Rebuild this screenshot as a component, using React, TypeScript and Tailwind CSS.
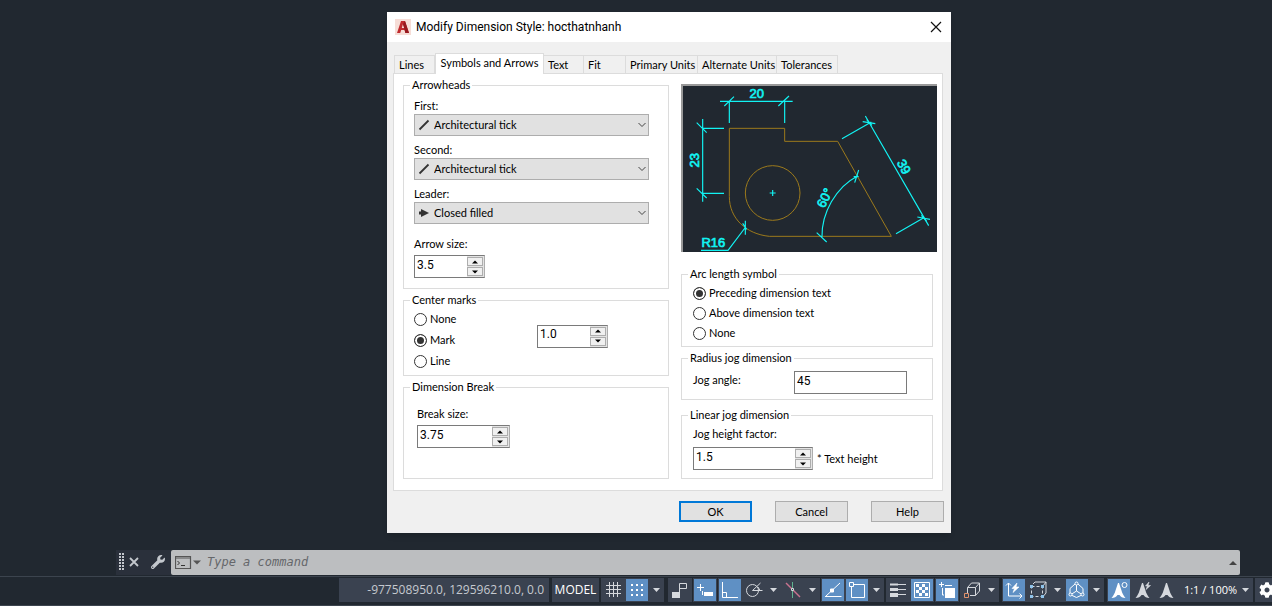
import type { ReactNode } from 'react';
import { FaCog, FaWrench } from 'react-icons/fa';

const TABS = [
  { label: 'Lines', width: 'w-[41px]' },
  { label: 'Symbols and Arrows', width: 'w-[109px]' },
  { label: 'Text', width: 'w-[40px]' },
  { label: 'Fit', width: 'w-[42px]' },
  { label: 'Primary Units', width: 'w-[72px]' },
  { label: 'Alternate Units', width: 'w-[79px]' },
  { label: 'Tolerances', width: 'w-[61px]' },
];

function AppLogo() {
  return (
    <svg viewBox="0 0 16 16" className="size-4" aria-hidden="true">
      <rect width="16" height="16" fill="#f6ddd7" />
      <path d="M2 14 6 2h4l4 12h-3.600l-.8-3H6.200l-1 3z" fill="#c02a2e" />
      <path d="M8 5 6.800 9h2.500z" fill="#f6ddd7" />
      <path d="M10 2l4 12h-3.600L8 5z" fill="#97191f" />
    </svg>
  );
}

function Group({ title, className, children }: { title: string; className?: string; children: ReactNode }) {
  return (
    <fieldset className={`border border-[#dcdcdc] ${className ?? ''}`}>
      <legend className="ml-1.5 px-0.5">{title}</legend>
      {children}
    </fieldset>
  );
}

function ArrowSelect({ id, label, value }: { id: string; label: string; value: string }) {
  return (
    <div className="flex flex-col gap-px">
      <label htmlFor={id}>{label}</label>
      <div className="relative">
        <select
          id={id}
          defaultValue={value}
          className="block h-[22px] w-full appearance-none border border-[#adadad] bg-[#e1e1e1] pl-[19px] outline-none"
        >
          <option>Architectural tick</option>
          <option>Closed filled</option>
        </select>
        <svg viewBox="0 0 12 12" className="pointer-events-none absolute left-1 top-[5px] size-3" aria-hidden="true">
          {value === 'Closed filled' ? (
            <path d="M1 4.500h2V2l8 4-8 4V7.500H1z" fill="#333" />
          ) : (
            <path d="M1.500 10.500l9-9" stroke="#333" strokeWidth="1.800" />
          )}
        </svg>
        <svg viewBox="0 0 8 6" className="pointer-events-none absolute right-[3px] top-2 h-1.5 w-2" aria-hidden="true">
          <path d="M.5 1 4 4.500 7.500 1" fill="none" stroke="#444" />
        </svg>
      </div>
    </div>
  );
}

function Spinner({ id, label, value, width }: { id: string; label?: string; value: string; width: string }) {
  return (
    <div className={`flex h-[23px] border border-[#7a7a7a] border-r-[#adadad] bg-white ${width}`}>
      <input
        id={id}
        aria-label={label}
        defaultValue={value}
        className="mb-1 min-w-0 flex-1 pl-0.5 font-['Roboto',sans-serif] text-[12px] leading-4 outline-none"
      />
      <div className="flex w-[17px] flex-col gap-px bg-[#e3e3e3] p-px pl-0">
        {['Increase', 'Decrease'].map((action) => (
          <button
            key={action}
            type="button"
            aria-label={action}
            className="flex min-h-0 flex-1 items-center justify-center border border-[#adadad] bg-[#f0f0f0]"
          >
            <svg viewBox="0 0 6 4" className="h-1 w-1.5" aria-hidden="true">
              <path d={action === 'Increase' ? 'M0 3.500 3 .5l3 3z' : 'M0 .5l3 3 3-3z'} fill="#000" />
            </svg>
          </button>
        ))}
      </div>
    </div>
  );
}

function Radio({ name, label, checked }: { name: string; label: string; checked?: boolean }) {
  return (
    <label className="flex items-center gap-[3px]">
      <input
        type="radio"
        name={name}
        defaultChecked={checked}
        className="size-[13px] appearance-none rounded-full border border-[#333] bg-white checked:bg-[#333] checked:shadow-[inset_0_0_0_2px_white]"
      />
      {label}
    </label>
  );
}

function DimensionPreview() {
  return (
    <svg viewBox="15 12 768 504" className="h-[168px] w-full bg-[#212830]" aria-label="Dimension preview">
      <g fill="none" stroke="#9c7a1c" strokeWidth="3">
        <path d="M160 145H326V184H485L646 469H280C210 462 160 415 160 350Z" />
        <circle cx="290" cy="339" r="82" />
      </g>
      <g fill="none" stroke="#12f3f3" strokeWidth="3.500">
        <path d="M132 64H350M160 64V129M326 64V129M145 78 174 50M307 78 339 48" />
        <path d="M80 117V365M80 145H144M80 340H144M62 128 92 158M62 325 92 354" />
        <path d="M281 339H299M290 330V348" />
        <path d="M75 511H156L209 441M208 422V464M200 430 212 448" />
        <path d="M438 470C437 400 478 322 546 287M422 458 452 486M533 290H548M536 308 548 270" />
        <path d="M568 108 758 437M498 176 586 126M660 461 746 412" />
        <path d="M560 125 598 131M572 119 588 136M724 411 762 418M736 406 752 424" />
      </g>
      <g
        fill="#12f3f3"
        stroke="#12f3f3"
        strokeWidth="2"
        fontSize="39"
        textAnchor="middle"
        className="font-['Liberation_Sans',sans-serif]"
      >
        <text x="242" y="55">20</text>
        <text transform="translate(70 241) rotate(-90)">23</text>
        <text x="112" y="502">R16</text>
        <text transform="translate(458 360) rotate(-63)">60°</text>
        <text transform="translate(672 267) rotate(60)">39</text>
      </g>
      <path d="M18 516V15H783" fill="none" stroke="#999" strokeWidth="6" />
    </svg>
  );
}

function ModifyStyleDialog() {
  return (
    <section
      role="dialog"
      aria-label="Modify Dimension Style"
      className="w-[564px] bg-[#f0f0f0] font-['Lato',sans-serif] text-[11px] leading-[14px] text-black shadow-md"
    >
      <header className="flex h-[30px] items-center bg-white pl-2 pr-[9px]">
        <AppLogo />
        <h1 className="ml-[5px] flex-1 font-['Roboto',sans-serif] text-[12px] leading-4 text-black">
          Modify Dimension Style: hocthatnhanh
        </h1>
        <button type="button" aria-label="Close">
          <svg viewBox="0 0 12 12" className="size-3" aria-hidden="true">
            <path d="M1 1l10 10M11 1 1 11" stroke="#111" strokeWidth="1.200" />
          </svg>
        </button>
      </header>

      <div className="pb-[11px] pl-1.5 pr-2 pt-[11px]">
        <div role="tablist" className="flex items-end pl-px">
          {TABS.map((tab, index) => (
            <button
              key={tab.label}
              type="button"
              role="tab"
              aria-selected={index === 1}
              className={
                index === 1
                  ? `${tab.width} relative -mb-px h-[21px] border border-b-0 border-[#dcdcdc] bg-white pb-0.5 text-center whitespace-nowrap`
                  : `${tab.width} h-[18px] border-r border-t border-[#dcdcdc] px-1 text-left whitespace-nowrap first:border-l`
              }
            >
              {tab.label}
            </button>
          ))}
        </div>

        <div className="grid grid-cols-[266fr_256fr] gap-3 border border-[#dcdcdc] bg-white pb-[11px] pl-[9px] pr-[5px] pt-1">
          <div className="flex flex-col gap-1">
            <Group title="Arrowheads">
              <div className="flex flex-col gap-[7px] pb-2.5 pl-2.5 pr-[19px] pt-[7px]">
                <ArrowSelect id="first" label="First:" value="Architectural tick" />
                <ArrowSelect id="second" label="Second:" value="Architectural tick" />
                <ArrowSelect id="leader" label="Leader:" value="Closed filled" />
                <div className="mt-1.5 flex flex-col gap-1">
                  <label htmlFor="arrow-size">Arrow size:</label>
                  <Spinner id="arrow-size" value="3.5" width="w-[71px]" />
                </div>
              </div>
            </Group>
            <Group title="Center marks">
              <div className="flex items-center pb-[7px] pl-2.5 pt-[5px]">
                <div className="flex w-[123px] flex-col gap-[7px]">
                  <Radio name="center" label="None" />
                  <Radio name="center" label="Mark" checked />
                  <Radio name="center" label="Line" />
                </div>
                <div className="-mt-2">
                  <Spinner id="mark-size" label="Mark size" value="1.0" width="w-[71px]" />
                </div>
              </div>
            </Group>
            <Group title="Dimension Break" className="flex-1">
              <div className="flex flex-col gap-1 pl-[13px] pt-[13px]">
                <label htmlFor="break-size">Break size:</label>
                <Spinner id="break-size" value="3.75" width="w-[93px]" />
              </div>
            </Group>
          </div>

          <div className="flex flex-col pt-1.5">
            <DimensionPreview />
            <Group title="Arc length symbol" className="mr-1 mt-[15px]">
              <div className="flex flex-col gap-1.5 pb-1.5 pl-[11px] pt-[5px]">
                <Radio name="arc" label="Preceding dimension text" checked />
                <Radio name="arc" label="Above dimension text" />
                <Radio name="arc" label="None" />
              </div>
            </Group>
            <Group title="Radius jog dimension" className="mr-1 mt-1">
              <div className="flex pb-[5px] pl-[11px] pr-[25px] pt-1.5">
                <label htmlFor="jog-angle" className="flex-1 pt-0.5">
                  Jog angle:
                </label>
                <input
                  id="jog-angle"
                  defaultValue="45"
                  className="h-[23px] w-[113px] border border-[#7a7a7a] pb-1 pl-0.5 font-['Roboto',sans-serif] text-[12px] outline-none"
                />
              </div>
            </Group>
            <Group title="Linear jog dimension" className="mr-1 mt-2">
              <div className="flex flex-col gap-1.5 pb-2 pl-[11px] pt-[5px]">
                <label htmlFor="jog-factor">Jog height factor:</label>
                <div className="flex items-center gap-1">
                  <Spinner id="jog-factor" value="1.5" width="w-[120px]" />
                  <span>* Text height</span>
                </div>
              </div>
            </Group>
          </div>
        </div>

        <div className="-mr-px mt-2.5 flex justify-end gap-[23px]">
          <button type="button" className="h-[21px] w-[73px] border-2 border-[#0078d7] bg-[#e1e1e1]">
            OK
          </button>
          <button type="button" className="h-[21px] w-[73px] border border-[#adadad] bg-[#e1e1e1]">
            Cancel
          </button>
          <button type="button" className="h-[21px] w-[73px] border border-[#adadad] bg-[#e1e1e1]">
            Help
          </button>
        </div>
      </div>
    </section>
  );
}

function CommandLine() {
  return (
    <div className="ml-[116px] mr-8 flex h-[25px]">
      <div className="flex w-[55px] items-center bg-[#2a303b] pb-0.5 pl-[3px] text-[#c3c7cd]">
        <svg viewBox="0 0 5 17" className="h-[17px] w-[5px]" aria-hidden="true">
          <path d="M1 0v17M4 0v17" stroke="currentColor" strokeWidth="2" strokeDasharray="2 1" />
        </svg>
        <button type="button" aria-label="Close command line" className="ml-[5px]">
          <svg viewBox="0 0 10 10" className="size-2.5" aria-hidden="true">
            <path d="M1 1l8 8M9 1 1 9" stroke="currentColor" strokeWidth="1.800" />
          </svg>
        </button>
        <button type="button" aria-label="Customize" className="ml-3">
          <FaWrench className="size-3.5" />
        </button>
      </div>
      <div className="flex flex-1 items-center rounded-xs bg-[#bcbec0] pl-1 pr-[3px]">
        <svg viewBox="0 0 26 13" className="h-[13px] w-[26px]" aria-hidden="true">
          <path d="M.5.5h15v12H.5zM.5 2h15" fill="none" stroke="#555" strokeWidth="1.200" />
          <path d="M2.500 5l2 2-2 2M6 9.500h4" fill="none" stroke="#333" />
          <path d="M18 4.500h8l-4 4z" fill="#555" />
        </svg>
        <input
          aria-label="Command"
          placeholder="Type a command"
          className="ml-1.5 flex-1 pb-0.5 font-['DejaVu_Sans_Mono',monospace] text-[12px] italic outline-none placeholder:text-[#65676a]"
        />
        <button type="button" aria-label="Command history">
          <svg viewBox="0 0 8 4" className="h-1 w-2" aria-hidden="true">
            <path d="M0 4 4 0l4 4z" fill="#444" />
          </svg>
        </button>
      </div>
    </div>
  );
}

function Tool({ label, active, children }: { label: string; active?: boolean; children: ReactNode }) {
  return (
    <button type="button" aria-label={label} aria-pressed={Boolean(active)} className="flex w-6 shrink-0 items-center justify-center">
      <svg
        viewBox="0 0 22 22"
        className={active ? 'size-[22px] bg-[#5f90c4] text-white' : 'size-[22px] text-[#d5d8dd]'}
        fill="none"
        stroke="currentColor"
        aria-hidden="true"
      >
        {children}
      </svg>
    </button>
  );
}

function Caret({ label }: { label: string }) {
  return (
    <button type="button" aria-label={label} className="flex w-[15px] shrink-0 items-center justify-center">
      <svg viewBox="0 0 7 4" className="h-1 w-[7px]" aria-hidden="true">
        <path d="M0 0h7L3.500 4z" fill="#d5d8dd" />
      </svg>
    </button>
  );
}

function Segment({ className, children }: { className?: string; children: ReactNode }) {
  return <div className={`flex shrink-0 bg-[#3a4250] ${className ?? ''}`}>{children}</div>;
}

const SCALE_PATH =
  'M10 4h1l2.500 7.500c.6 2.500 2 5 4 7.500-3 0-4.800-1-6-3h-2c-1.200 2-3 3-6 3 2-2.500 3.400-5 4-7.500z';

function StatusBar() {
  return (
    <footer className="flex h-[30px] justify-end overflow-hidden border-y border-[#3c444e] pb-[3px] pt-px font-['Open_Sans',sans-serif] text-[12px] text-white">
      <Segment className="w-[210px] items-center justify-end pr-[5px]">
        <span className="whitespace-nowrap text-[#c5c9cf]">-977508950.0, 129596210.0, 0.0</span>
      </Segment>
      <Segment className="ml-[3px] w-[47px]">
        <button type="button" className="w-full">
          MODEL
        </button>
      </Segment>
      <Segment className="ml-0.5">
        <Tool label="Grid">
          <path d="M7.500 3v15M11.500 3v15M15.500 3v15M4 6.500h15M4 10.500h15M4 14.500h15" />
        </Tool>
        <Tool label="Snap" active>
          <path d="M5 6h12M5 11h12M5 16h12" strokeWidth="2" strokeDasharray="2 3" />
        </Tool>
        <Caret label="Snap options" />
      </Segment>
      <Segment className="ml-1">
        <Tool label="Infer constraints">
          <path d="M3 13h7v6H3z" fill="currentColor" stroke="none" />
          <path d="M10.500 19V4.500h7v5h-7" />
        </Tool>
      </Segment>
      <Segment className="ml-px">
        <Tool label="Dynamic input" active>
          <path d="M6.500 5v7M3 8.500h7M8.500 12v4" />
          <path d="M10 13h9v4h-9z" fill="currentColor" stroke="none" />
        </Tool>
      </Segment>
      <Segment className="ml-px">
        <Tool label="Ortho mode" active>
          <path d="M3.500 3v15.500H19M3.500 13.500h4v5" />
        </Tool>
        <Tool label="Polar tracking">
          <circle cx="9.500" cy="11.500" r="6" />
          <path d="M9.500 11.500 17.500 4M9.500 11.500h10M15 8l2 3.500" />
        </Tool>
        <Caret label="Polar options" />
        <Tool label="Isometric drafting">
          <path d="M4 4l14 14" stroke="#c9738f" strokeWidth="1.400" />
          <path d="M10.500 3v16" stroke="#5fb290" />
          <path d="M9.500 9.500h2v2h-2z" fill="#3a4250" />
        </Tool>
        <Caret label="Isometric options" />
      </Segment>
      <Segment className="ml-px">
        <Tool label="Object snap tracking" active>
          <path d="M3 17.500h16.500M4 17 18 4" />
          <path d="M8.500 10h3v3h-3z" fill="currentColor" />
        </Tool>
        <Tool label="Object snap" active>
          <path d="M5.500 5.500h13v13h-13z" />
          <path d="M3.500 3.500h4v4h-4z" fill="#5f90c4" />
        </Tool>
        <Caret label="Object snap options" />
      </Segment>
      <Segment className="ml-0.5">
        <Tool label="Lineweight">
          <path d="M10 5.500h9M10 10.500h9M10 15.500h9" />
          <path d="M3 5.500h8" strokeWidth="2" />
          <path d="M3 10.500h8" strokeWidth="3" />
          <path d="M3 16h8" strokeWidth="4" />
        </Tool>
        <Tool label="Transparency" active>
          <path d="M3.500 3.500h15v15h-15z" />
          <path d="M5 6.500h12M5 12.500h12" strokeWidth="3" strokeDasharray="3 3" />
          <path d="M8 9.500h9M8 15.500h9" strokeWidth="3" strokeDasharray="3 3" />
        </Tool>
      </Segment>
      <Segment className="ml-px">
        <Tool label="Selection cycling" active>
          <path d="M5.500 3v5M3 5.500h5M9 6.500h7M6.500 9v7H8" />
          <path d="M9 9h10v10H9z" fill="currentColor" stroke="none" />
        </Tool>
      </Segment>
      <Segment className="ml-px">
        <Tool label="3D object snap">
          <path d="M6.500 14V8.500h8v8H9M6.500 8.500l4-4.500h8v8l-4 4.500M14.500 8.500l4-4.500" />
          <path d="M3.500 14.500h4v4h-4z" stroke="#e0926c" />
        </Tool>
        <Caret label="3D object snap options" />
      </Segment>
      <Segment className="ml-[3px]">
        <Tool label="Dynamic UCS" active>
          <path d="M5.500 4v13H19M3 6.500 5.500 4 8 6.500M16.500 14.500 19 17l-2.500 2.500" />
          <path d="M14 4l-5 5.500h2.500L10 13.500l6-5.500h-3z" fill="currentColor" strokeWidth=".6" />
        </Tool>
        <Tool label="Selection filter">
          <path d="M4.500 7.500h11v10h-11z" strokeDasharray="3 2" />
          <path d="M6 5l2-2h11v11l-2.500 3M16 7l3-4" />
          <path d="M3 6h3v3H3zM14 6h3v3h-3zM3 16h3v3H3zM14 16h3v3h-3z" fill="#8fc3ea" stroke="none" />
        </Tool>
        <Caret label="Filter options" />
        <Tool label="Gizmo" active>
          <path d="M10.500 5v7L5 15.500M10.500 12l5.500 3.500M9 5 4 9.500v6l6.500 3 6.500-3v-6L12 5" />
          <circle cx="10.500" cy="4.500" r="1.500" fill="#5f90c4" />
          <circle cx="4.500" cy="15.500" r="1.500" fill="#5f90c4" />
          <circle cx="16.500" cy="15.500" r="1.500" fill="#5f90c4" />
        </Tool>
        <Caret label="Gizmo options" />
      </Segment>
      <Segment className="ml-[3px]">
        <Tool label="Annotation visibility" active>
          <path d={SCALE_PATH} fill="currentColor" stroke="none" />
          <circle cx="16.500" cy="6" r="2.500" />
        </Tool>
        <Tool label="Auto scale">
          <path d={SCALE_PATH} fill="currentColor" stroke="none" />
          <path d="M17 3l-3.500 4h2L14 10.500 18.500 6.500h-2.500z" fill="currentColor" strokeWidth=".6" />
        </Tool>
        <Tool label="Annotation scale">
          <path d={SCALE_PATH} fill="currentColor" stroke="none" />
        </Tool>
        <button type="button" className="w-[59px] whitespace-nowrap pl-1 text-center text-[11px]">
          1:1 / 100%
        </button>
        <Caret label="Scale options" />
      </Segment>
      <Segment className="ml-0.5 w-[17px] overflow-hidden">
        <button type="button" aria-label="Workspace settings" className="shrink-0 pl-1">
          <FaCog className="size-4" />
        </button>
      </Segment>
    </footer>
  );
}

export default function App() {
  return (
    <div className="flex min-h-screen flex-col bg-[#212830]">
      <main className="flex flex-1 items-start justify-center pb-4 pl-[66px] pt-3">
        <ModifyStyleDialog />
      </main>
      <CommandLine />
      <div className="h-px shrink-0" />
      <StatusBar />
    </div>
  );
}
